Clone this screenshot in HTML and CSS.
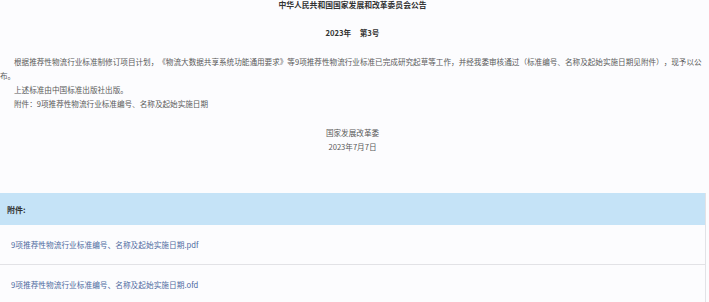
FILE: index.html
```html
<!DOCTYPE html>
<html>

<head>
  <meta charset="utf-8">
  <link rel="stylesheet" href="styles.css">
</head>

<body>
  <div class="page">
    <div class="notice">
      <h1 class="notice-title">中华人民共和国国家发展和改革委员会公告</h1>
      <p class="notice-number">2023年&nbsp;&nbsp;&nbsp;&nbsp;&nbsp;第3号</p>

      <div class="notice-body">
        <p class="para">根据推荐性物流行业标准制修订项目计划，《物流大数据共享系统功能通用要求》等9项推荐性物流行业标准已完成研究起草等工作，并经我委审核通过（标准编号、名称及起始实施日期见附件），现予以公布。</p>
        <p class="para">上述标准由中国标准出版社出版。</p>
        <p class="para">附件：9项推荐性物流行业标准编号、名称及起始实施日期</p>
      </div>

      <div class="notice-sign">
        <div>国家发展改革委</div>
        <div>2023年7月7日</div>
      </div>
    </div>

    <div class="attach">
      <div class="attach-head">附件:</div>
      <div class="attach-row"><a class="attach-link" href="#">9项推荐性物流行业标准编号、名称及起始实施日期.pdf</a></div>
      <div class="attach-row"><a class="attach-link" href="#">9项推荐性物流行业标准编号、名称及起始实施日期.ofd</a></div>
    </div>
  </div>
</body>

</html>
```

FILE: styles.css
```css
* {
  box-sizing: border-box;
  margin: 0;
  padding: 0;
}

body {
  background: #fcfcfe;
  font-family: "Noto Sans CJK SC", "Noto Sans", sans-serif;
  color: #555;
}

.page {
  width: 706px;
}

.notice {
  width: 705px;
  font-size: 7.6px;
  color: #5a5a5a;
}

.notice-title {
  font-size: 7.8px;
  font-weight: 700;
  color: #333;
  text-align: center;
  line-height: 10px;
}

.notice-number {
  margin-top: 18px;
  font-weight: 700;
  color: #333;
  text-align: center;
  line-height: 10px;
}

.notice-body {
  margin-top: 17px;
}

.para {
  line-height: 14px;
  text-indent: 14px;
  text-spacing-trim: space-all;
}

.notice-sign {
  margin-top: 15px;
  text-align: center;
  line-height: 14px;
}

.attach {
  margin-top: 39px;
  border-right: 1px solid #e2e2e6;
}

.attach-head {
  height: 32px;
  display: flex;
  align-items: center;
  padding-left: 7px;
  background: #c5e3f7;
  font-size: 8px;
  font-weight: 700;
  color: #333;
}

.attach-row {
  height: 40px;
  display: flex;
  align-items: center;
  padding-left: 11px;
  border-bottom: 1px solid #e2e2e6;
}

.attach-link {
  font-size: 7.7px;
  color: #4e6b9e;
  text-decoration: none;
}
```
